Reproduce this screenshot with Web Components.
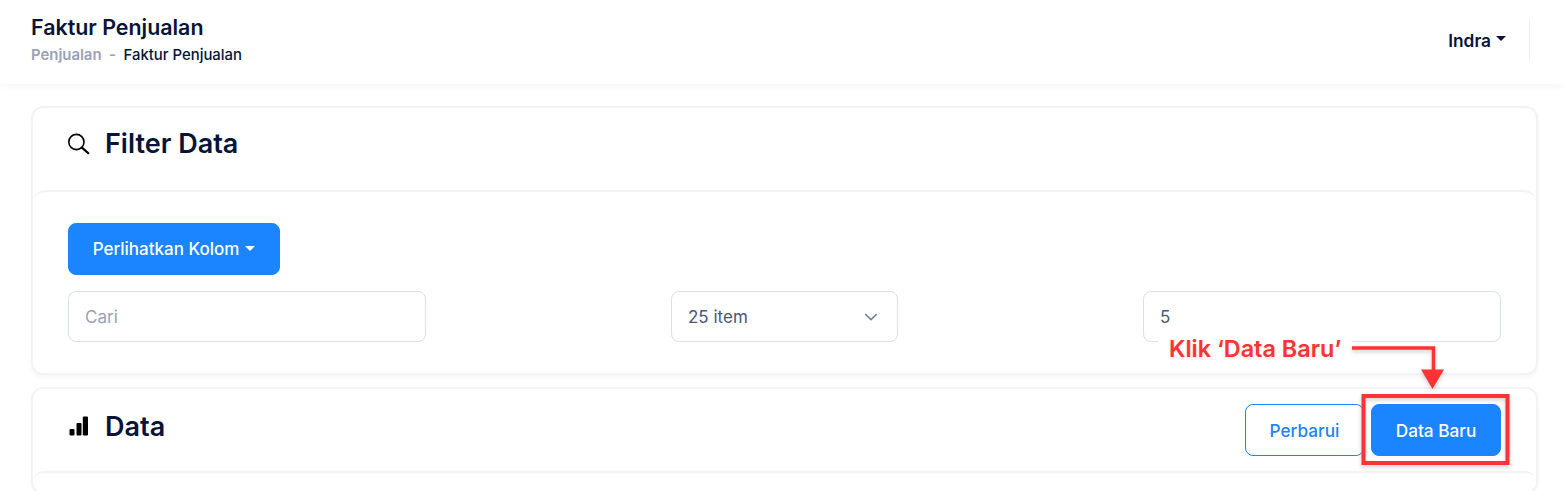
<!DOCTYPE html>
<html><head><meta charset="utf-8"><style>
html,body{margin:0;height:491px;overflow:hidden;background:#fff;font-family:Inter,"Liberation Sans",sans-serif;color:#071437}
main{display:block;padding:22px 26px 0 31px}
</style></head><body>
<app-header title="Faktur Penjualan" parent="Penjualan" user="Indra"></app-header>
<main>
<data-card label="Filter Data" icon="search">
  <app-button variant="solid" caret style="align-self:flex-start;width:212px;font-size:17px">Perlihatkan Kolom</app-button>
  <filter-row>
    <text-field placeholder="Cari" style="width:358px"></text-field>
    <select-field value="25 item" style="width:227px"></select-field>
    <text-field value="5" style="width:358px"></text-field>
  </filter-row>
</data-card>
<data-card label="Data" icon="bars" style="margin-top:12px">
  <app-button slot="actions" variant="outline" style="width:119px">Perbarui</app-button>
  <app-button slot="actions" variant="solid" style="width:130px">Data Baru</app-button>
</data-card>
</main>
<call-out text="Klik ‘Data Baru’"></call-out>
<script>
const def=(n,html)=>{customElements.define(n,class extends HTMLElement{
  connectedCallback(){if(this.shadowRoot)return;const s=this.attachShadow({mode:'open'});s.innerHTML=typeof html==='function'?html(this):html;}
});};
def('app-header',e=>`<style>
:host{display:flex;height:84px;box-sizing:border-box;padding:0 34px 0 31px;align-items:center;justify-content:space-between;background:#fff;box-shadow:0 2px 8px rgba(30,40,80,.045);position:relative}
h1{margin:0;font-size:21.400px;line-height:26px;font-weight:600;color:#071437}
.crumb{display:flex;font-size:14.900px;line-height:18px;font-weight:500;margin-top:6px;color:#071437}
.crumb b{font-weight:600;color:#99a1b7}.crumb i{font-style:normal;font-weight:600;color:#99a1b7;margin:0 7.500px}
.wrap{margin-top:-6px}
.user{display:flex;align-items:center;height:42px;padding-right:23px;border-right:1px solid #f1f1f4;font-size:17.300px;font-weight:600;margin-top:-4px}
.user span{width:0;height:0;border:5px solid transparent;border-top-color:#071437;border-bottom:0;margin-left:5px;margin-top:-3px}
</style><div class="wrap"><h1>${e.getAttribute('title')}</h1><div class="crumb"><b>${e.getAttribute('parent')}</b><i>-</i>${e.getAttribute('title')}</div></div><div class="user">${e.getAttribute('user')}<span></span></div>`);
const icons={
search:`<svg width="24" height="24" viewBox="0 0 24 24" fill="none"><circle cx="9.400" cy="11" r="7.600" stroke="#000" stroke-width="1.600"/><path d="M15 16.600 21.300 22.200" stroke="#000" stroke-width="2.200" stroke-linecap="round"/></svg>`,
bars:`<svg width="24" height="24" viewBox="0 0 24 24" fill="#000"><rect x="2.500" y="15" width="5" height="6.500" rx="1"/><rect x="9.500" y="9" width="5" height="12.500" rx="1"/><rect x="15.800" y="2.500" width="5.200" height="19" rx="1"/></svg>`};
def('data-card',e=>`<style>
:host{display:block;border:2px solid #f3f3f6;border-radius:12px;box-shadow:0 3px 4px rgba(0,0,0,.03);background:#fff}
.head{display:flex;align-items:center;justify-content:space-between;height:82px;box-sizing:border-box;padding:0 35px 0 34px}
.t{display:flex;align-items:center;gap:14px;font-size:27px;font-weight:600;color:#071437;margin-top:-8px}
:host([icon=search]) .t{margin-top:-12px}
.t svg{display:block}
.a{display:flex;gap:7px}
.body{display:flex;flex-direction:column;gap:16px;padding:31px 35px;border-top:2px solid #f3f3f6;border-radius:12px}
.body:not(.has){height:19px;padding:0}
</style><div class="head"><div class="t">${icons[e.getAttribute('icon')]}<span>${e.getAttribute('label')}</span></div><div class="a"><slot name="actions"></slot></div></div><div class="body ${e.getAttribute('icon')==='search'?'has':''}"><slot></slot></div>`);
def('filter-row',`<style>:host{display:flex;justify-content:space-between}</style><slot></slot>`);
def('app-button',e=>`<style>
:host{display:flex;box-sizing:border-box;height:52px;align-items:center;justify-content:center;border-radius:8px;font-size:17.200px;font-weight:500;border:1px solid #1b84ff}
:host([variant=solid]){background:#1b84ff;color:#fff}
:host([variant=outline]){background:#fff;color:#1b84ff}
span{width:0;height:0;border:5px solid transparent;border-top-color:#fff;border-bottom:0;margin-left:6px;margin-top:-2px}
</style><slot></slot>${e.hasAttribute('caret')?'<span></span>':''}`);
const fieldCss=`:host{display:flex;box-sizing:border-box;height:51px;align-items:center;justify-content:space-between;border:1px solid #dbdfe9;border-radius:8px;padding:0 16px;font-size:17px;color:#4b5675;background:#fff}
.p{color:#99a1b7}`;
def('text-field',e=>`<style>${fieldCss}</style>${e.hasAttribute('placeholder')?`<span class="p">${e.getAttribute('placeholder')}</span>`:`<span>${e.getAttribute('value')}</span>`}`);
def('select-field',e=>`<style>${fieldCss}:host{padding-right:19px}svg{display:block}</style><span>${e.getAttribute('value')}</span><svg width="14" height="10" viewBox="0 0 14 10" fill="none"><path d="M1.200 2 7 7.600 12.800 2" stroke="#78829d" stroke-width="1.700"/></svg>`);
def('call-out',e=>`<style>
:host{display:block;position:absolute;left:0;top:0;width:1564px;height:491px;pointer-events:none}
.label{position:absolute;left:1158px;top:336px;width:194px;height:26px;box-sizing:border-box;padding-left:11px;background:#fff;color:#ff3333;font-size:23.400px;font-weight:600;line-height:26px;white-space:nowrap;text-shadow:0 1px 3px rgba(0,0,0,.12)}
svg{position:absolute;left:0;top:0;filter:drop-shadow(0 2px 2px rgba(0,0,0,.2))}
</style><div class="label">${e.getAttribute('text')}</div>
<svg width="1564" height="491" fill="none"><path d="M1352 348H1433.500V371" stroke="#ff3333" stroke-width="3.500"/><path d="M1421 369.500H1444L1432.500 389Z" fill="#ff3333"/><rect x="1363.500" y="396" width="144" height="67" stroke="#ff3333" stroke-width="4"/></svg>`);
</script>
</body></html>
